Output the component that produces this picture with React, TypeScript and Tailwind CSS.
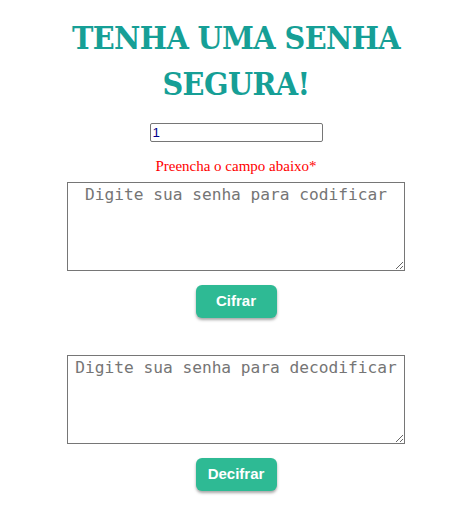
import React, { useState } from 'react';

const App: React.FC = () => {
  const [chave, setChave] = useState('1');
  const [codificar, setCodificar] = useState('');
  const [decodificar, setDecodificar] = useState('');

  return (
    <div className="min-h-[528px] w-full bg-white flex flex-col items-center pt-[15px] pl-[5px]">
      {/* Titulo */}
      <h1 className="text-center font-bold text-[#169f96] text-[32px] leading-[46px] tracking-[-0.6px] font-['DejaVu_Serif_Condensed','DejaVu_Serif',serif] [font-stretch:condensed]">
        TENHA UMA SENHA
        <br />
        SEGURA!
      </h1>

      <input
        type="text"
        value={chave}
        onChange={(e) => setChave(e.target.value)}
        className="mt-[16px] w-[173px] h-[19px] border border-[#767676] rounded-[2px] px-[2px] text-[13.33px] text-[#00008b] font-['Liberation_Sans',Arial,sans-serif] outline-none"
      />

      <p className="mt-[15px] text-[15px] leading-[18px] text-[#ff0000] font-['Liberation_Serif',serif]">
        Preencha o campo abaixo*
      </p>

      <textarea
        value={codificar}
        onChange={(e) => setCodificar(e.target.value)}
        placeholder="Digite sua senha para codificar"
        className="mt-[7px] w-[338px] h-[89px] border border-[#767676] px-[1px] py-[2px] text-center text-[16.2px] leading-[20px] font-['DejaVu_Sans_Mono',monospace] placeholder:text-[#757575] outline-none"
      />

      <button className="mt-[14px] w-[81px] h-[33px] rounded-[6px] bg-[#2eba94] text-white font-bold text-[15px] font-['Liberation_Sans',Arial,sans-serif] shadow-[0_2px_3px_rgba(0,0,0,0.35)]">
        Cifrar
      </button>

      <textarea
        value={decodificar}
        onChange={(e) => setDecodificar(e.target.value)}
        placeholder="Digite sua senha para decodificar"
        className="mt-[37px] w-[338px] h-[89px] border border-[#767676] px-[1px] py-[2px] text-center text-[16.2px] leading-[20px] font-['DejaVu_Sans_Mono',monospace] placeholder:text-[#757575] outline-none"
      />

      <button className="mt-[14px] w-[81px] h-[33px] rounded-[6px] bg-[#2eba94] text-white font-bold text-[15px] font-['Liberation_Sans',Arial,sans-serif] shadow-[0_2px_3px_rgba(0,0,0,0.35)]">
        Decifrar
      </button>
    </div>
  );
};

export default App;
